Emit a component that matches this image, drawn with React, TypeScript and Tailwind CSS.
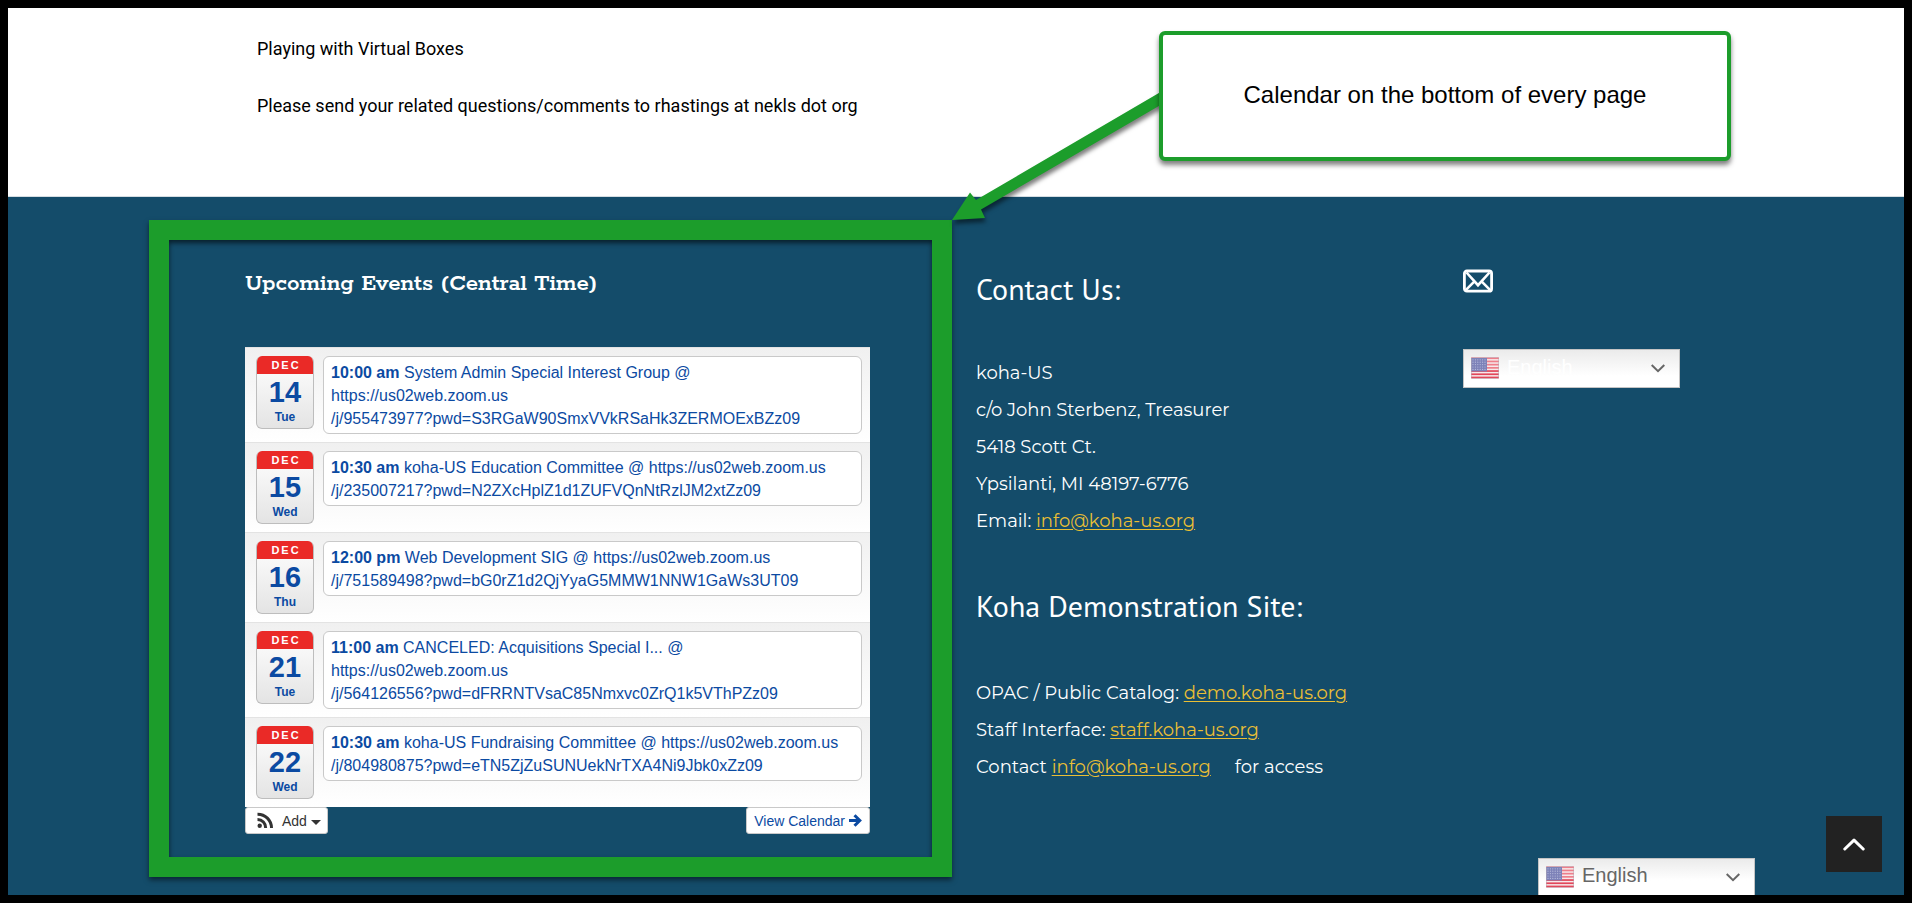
import React from "react";

type CalendarEvent = {
  month: string;
  day: string;
  weekday: string;
  time: string;
  title: string;
  lines: string[];
};

const events: CalendarEvent[] = [
  {
    month: "DEC",
    day: "14",
    weekday: "Tue",
    time: "10:00 am",
    title: "System Admin Special Interest Group @",
    lines: ["https://us02web.zoom.us", "/j/955473977?pwd=S3RGaW90SmxVVkRSaHk3ZERMOExBZz09"],
  },
  {
    month: "DEC",
    day: "15",
    weekday: "Wed",
    time: "10:30 am",
    title: "koha-US Education Committee @ https://us02web.zoom.us",
    lines: ["/j/235007217?pwd=N2ZXcHplZ1d1ZUFVQnNtRzlJM2xtZz09"],
  },
  {
    month: "DEC",
    day: "16",
    weekday: "Thu",
    time: "12:00 pm",
    title: "Web Development SIG @ https://us02web.zoom.us",
    lines: ["/j/751589498?pwd=bG0rZ1d2QjYyaG5MMW1NNW1GaWs3UT09"],
  },
  {
    month: "DEC",
    day: "21",
    weekday: "Tue",
    time: "11:00 am",
    title: "CANCELED: Acquisitions Special I... @",
    lines: ["https://us02web.zoom.us", "/j/564126556?pwd=dFRRNTVsaC85Nmxvc0ZrQ1k5VThPZz09"],
  },
  {
    month: "DEC",
    day: "22",
    weekday: "Wed",
    time: "10:30 am",
    title: "koha-US Fundraising Committee @ https://us02web.zoom.us",
    lines: ["/j/804980875?pwd=eTN5ZjZuSUNUekNrTXA4Ni9Jbk0xZz09"],
  },
];

function EventRow({ event }: { event: CalendarEvent }) {
  return (
    <li className="flex items-start gap-[9px] border-t border-[#e3e3e3] bg-linear-to-b from-[#f0f0f0] to-white py-2 pr-2 pl-[11px]">
      <a
        href="#day"
        className="flex h-[73px] w-[58px] shrink-0 flex-col overflow-hidden rounded-md border border-t-0 border-[#bdbdbd] bg-linear-to-b from-white to-[#e4e4e4] text-center font-bold text-[#0b4aa2]"
      >
        <span className="-mx-px bg-[#ea2a27] pl-0.5 text-[11px] leading-[18px] tracking-[2px] text-white">
          {event.month}
        </span>
        <span className="text-[29px] leading-9">{event.day}</span>
        <span className="text-xs leading-[14px]">{event.weekday}</span>
      </a>
      <a
        href="#event"
        className="min-w-0 flex-1 rounded-md border border-[#c9c9c9] bg-white px-[7px] pt-1 pb-[3px] text-base leading-[23px] text-[#0b4aa2]"
      >
        <b>{event.time}</b> {event.title}
        {event.lines.map((line) => (
          <span key={line} className="block">
            {line}
          </span>
        ))}
      </a>
    </li>
  );
}

function Flag() {
  return (
    <svg viewBox="0 0 28 22" className="h-[22px] w-7" aria-hidden="true">
      <rect width="28" height="22" rx="1" fill="#f6e9ea" />
      {[0, 1, 2, 3, 4, 5, 6].map((i) => (
        <rect key={i} y={i * 3.2 + 0.4} width="28" height="1.7" fill={i > 3 ? "#e2475a" : "#ee7f8b"} />
      ))}
      <rect y="1" width="16" height="13.4" fill="#7d82b8" />
      {[0, 1, 2, 3, 4].map((r) =>
        [0, 1, 2, 3, 4, 5].map((c) => (
          <circle key={`${r}-${c}`} cx={2 + c * 2.4} cy={2.8 + r * 2.4} r="0.6" fill="#b9bddd" />
        )),
      )}
      <rect x="0.5" y="0.5" width="27" height="21" rx="1" fill="none" stroke="#b5a9b6" strokeOpacity="0.5" />
    </svg>
  );
}

function LanguageSelect({ className }: { className: string }) {
  return (
    <div className="relative w-[217px]">
      <select
        aria-label="Language"
        className={`block w-full appearance-none border border-[#c4c4c4] bg-linear-to-b from-[#ebebeb] pr-10 pb-1 pl-[43px] text-xl ${className}`}
      >
        <option>English</option>
      </select>
      <div className="pointer-events-none absolute top-2 left-2">
        <Flag />
      </div>
      <svg
        viewBox="0 0 14 9"
        className="pointer-events-none absolute top-[15px] right-[15px] h-[9px] w-3.5"
        fill="none"
        stroke="#666"
        strokeWidth="2"
        aria-hidden="true"
      >
        <path d="M0.7 1 7 7.2 13.3 1" />
      </svg>
    </div>
  );
}

const link = "text-[#eabf35] underline underline-offset-2";
const heading = "font-['PT_Sans','Noto_Sans',sans-serif] text-[30px] leading-10";

export default function App() {
  return (
    <div className="relative flex min-h-screen flex-col overflow-hidden border-8 border-black bg-white font-['Liberation_Sans',Arial,sans-serif]">
      <main className="h-[189px] shrink-0 border-b border-[#d5dde2] pt-[27px] pl-[249px] font-['Roboto',sans-serif] text-lg leading-7 text-black">
        <p>Playing with Virtual Boxes</p>
        <p className="mt-[29px]">Please send your related questions/comments to rhastings at nekls dot org</p>
      </main>

      <footer className="relative grid flex-1 grid-cols-[803fr_487fr_465fr] bg-[#144c6a] pt-[23px] pb-[18px] pl-[141px] text-white">
        <section className="border-20 border-[#1c9d2b] pt-7 pr-[62px] pl-[76px] shadow-[0_3px_5px_rgba(0,0,0,0.5),inset_0_3px_5px_rgba(0,0,0,0.6)]">
          <h2 className="font-['Rokkitt','DejaVu_Serif_Condensed','DejaVu_Serif',serif] text-[25px] leading-8 font-semibold">
            Upcoming Events (Central Time)
          </h2>
          <ul className="mt-[47px]">
            {events.map((event) => (
              <EventRow key={event.day} event={event} />
            ))}
          </ul>
          <div className="flex justify-between text-sm">
            <button
              type="button"
              className="flex h-[27px] items-center rounded-[3px] border border-[#c9c9c9] bg-white pr-1.5 pl-[11px] text-[#333]"
            >
              <svg viewBox="0 0 17 17" className="mr-2 size-[17px]" fill="none" stroke="#333" strokeWidth="3" aria-hidden="true">
                <circle cx="2.7" cy="13.8" r="2.2" fill="#333" stroke="none" />
                <path d="M.5 7.500A8.200 8.200 0 0 1 8.700 16M.5 2.200A13.800 13.800 0 0 1 14.500 16" />
              </svg>
              Add
              <svg viewBox="0 0 10 5" className="mt-1 ml-1 h-[5px] w-2.5" fill="#333" aria-hidden="true">
                <path d="M0 0h10L5 5z" />
              </svg>
            </button>
            <a
              href="#calendar"
              className="flex h-[27px] items-center gap-1 rounded-[3px] border border-[#c9c9c9] bg-white px-[7px] text-[#0b4aa2]"
            >
              View Calendar
              <svg viewBox="0 0 13 13" className="size-[13px]" fill="none" stroke="#0b4aa2" strokeWidth="3" aria-hidden="true">
                <path d="M0 6.500h10M5.500 1.200 10.800 6.500 5.500 11.800" />
              </svg>
            </a>
          </div>
        </section>

        <section className="pt-[49px] pl-6 font-['Montserrat','Inter',sans-serif] text-lg leading-[37px]">
          <h2 className={heading}>Contact Us:</h2>
          <address className="mt-[46px] not-italic">
            <p>koha-US</p>
            <p>c/o John Sterbenz, Treasurer</p>
            <p>5418 Scott Ct.</p>
            <p>Ypsilanti, MI 48197-6776</p>
            <p>
              Email:{" "}
              <a href="mailto:info@koha-us.org" className={link}>
                info@koha-us.org
              </a>
            </p>
          </address>
          <h2 className={`mt-[46px] ${heading}`}>Koha Demonstration Site:</h2>
          <div className="mt-[49px]">
            <p>
              OPAC / Public Catalog:{" "}
              <a href="#demo" className={link}>
                demo.koha-us.org
              </a>
            </p>
            <p>
              Staff Interface:{" "}
              <a href="#staff" className={link}>
                staff.koha-us.org
              </a>
            </p>
            <p>
              Contact{" "}
              <a href="mailto:info@koha-us.org" className={link}>
                info@koha-us.org
              </a>
              <span className="ml-6">for access</span>
            </p>
          </div>
        </section>

        <section className="flex flex-col items-start gap-14 pt-[49px] pl-6">
          <a href="mailto:info@koha-us.org" aria-label="Email">
            <svg viewBox="0 0 30 24" className="h-6 w-[30px]" fill="none" stroke="#fff" aria-hidden="true">
              <rect x="1.4" y="2" width="27.2" height="20.2" rx="2.5" strokeWidth="2.800" />
              <path d="M3.500 3.500 15 16.200 26.500 3.500M3 20.800l8.200-8.200M27 20.800l-8.200-8.200" strokeWidth="2.600" />
            </svg>
          </a>
          <LanguageSelect className="h-[39px] to-white to-70% text-white" />
        </section>

        <div className="absolute right-[149px] bottom-0">
          <LanguageSelect className="h-[37px] border-b-0 to-white to-60% text-[#666]" />
        </div>
        <button
          type="button"
          aria-label="Back to top"
          className="absolute right-[22px] bottom-[23px] flex size-14 items-center justify-center bg-[#222]"
        >
          <svg
            viewBox="0 0 22 13"
            className="h-[13px] w-[22px]"
            fill="none"
            stroke="#fff"
            strokeWidth="3"
            strokeLinecap="round"
            strokeLinejoin="round"
            aria-hidden="true"
          >
            <path d="M1.800 11 11 2.200 20.200 11" />
          </svg>
        </button>
      </footer>

      <svg
        viewBox="0 0 220 140"
        className="absolute top-[80px] left-[940px] h-[140px] w-[220px] overflow-visible drop-shadow-[1px_4px_2px_rgba(0,0,0,0.5)]"
        aria-hidden="true"
      >
        <path d="M4 132 22 104.500 28 112 216 2V15L33 121.500 37 130Z" fill="#1c9d2b" />
      </svg>
      <div className="absolute top-[23px] left-[1151px] flex h-[130px] w-[572px] items-center justify-center rounded-md border-4 border-[#1c9d2b] bg-white pb-0.5 text-2xl text-black shadow-[0_4px_5px_rgba(0,0,0,0.5)]">
        Calendar on the bottom of every page
      </div>
    </div>
  );
}
